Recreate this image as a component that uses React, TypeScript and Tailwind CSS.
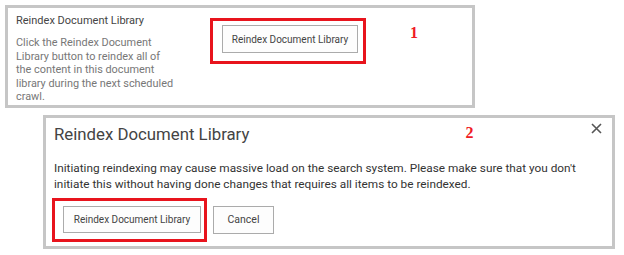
const font = { fontFamily: 'Roboto, "Noto Sans", sans-serif' };
const serif = { fontFamily: '"Liberation Serif", serif' };

function SpButton({ label, className }: { label: string; className?: string }) {
  return (
    <button
      className={
        'flex items-center justify-center whitespace-nowrap border border-[#ababab] bg-[#fdfdfd] text-[#444] ' +
        (className ?? '')
      }
    >
      {label}
    </button>
  );
}

export default function App() {
  return (
    <div className="w-[624px] h-[255px] bg-white overflow-hidden" style={font}>
      {/* panel 1: settings row */}
      <div className="ml-[5px] mt-[5px] w-[470px] h-[103px] border-[3px] border-[#c6c6c6] flex">
        <div className="ml-[8px] mt-[4px] w-[190px] shrink-0">
          <div className="text-[11px] leading-[18px] text-[#444] whitespace-nowrap">Reindex Document Library</div>
          <p className="mt-[6px] text-[10.9px] leading-[13.5px] text-[#777] whitespace-nowrap">
            Click the Reindex Document
            <br />
            Library button to reindex all of
            <br />
            the content in this document
            <br />
            library during the next scheduled
            <br />
            crawl.
          </p>
        </div>
        <div className="ml-[4px] mt-[10px] h-[46px] w-[156px] border-[3px] border-[#e8141d] pl-[9px] pt-[4px]">
          <SpButton label="Reindex Document Library" className="w-[136px] h-[28px] text-[10px]" />
        </div>
        <div className="ml-[44px] mt-[13px] text-[16px] font-bold text-[#f01c24]" style={serif}>
          1
        </div>
      </div>

      {/* panel 2: confirmation dialog */}
      <div className="ml-[43px] mt-[7px] w-[572px] h-[134px] border-[3px] border-[#c6c6c6] pl-[6px] pr-[10px]">
        <div className="flex items-start">
          <h2 className="ml-[2px] mt-[4px] text-[16.8px] leading-[24px] text-[#444] whitespace-nowrap">Reindex Document Library</h2>
          <span className="ml-[216px] mt-[3px] text-[16px] font-bold text-[#f01c24]" style={serif}>
            2
          </span>
          <svg className="ml-auto mt-[5px]" width="11" height="11" viewBox="0 0 11 11">
            <path d="M1 1 L10 10 M10 1 L1 10" stroke="#555" strokeWidth="1.6" />
          </svg>
        </div>
        <p className="ml-[2px] mt-[14px] text-[11.8px] leading-[16px] text-[#333] whitespace-nowrap">
          Initiating reindexing may cause massive load on the search system. Please make sure that you don't
          <br />
          initiate this without having done changes that requires all items to be reindexed.
        </p>
        <div className="flex items-start mt-[6px]">
          <div className="h-[44px] w-[155px] border-[3px] border-[#e8141d] pl-[8px] pt-[5px]">
            <SpButton label="Reindex Document Library" className="w-[138px] h-[27px] text-[10px]" />
          </div>
          <SpButton label="Cancel" className="ml-[6px] mt-[8px] w-[61px] h-[28px] text-[10.5px]" />
        </div>
      </div>
    </div>
  );
}
